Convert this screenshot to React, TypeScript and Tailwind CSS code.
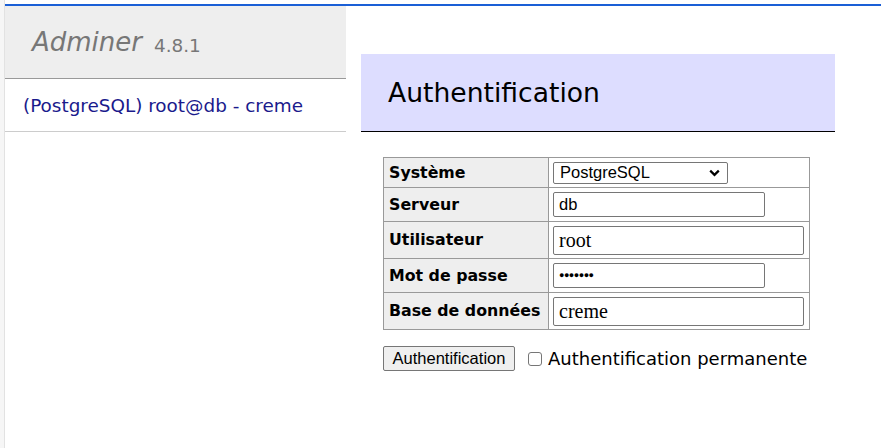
import React from 'react';

const rows = [
  { label: 'Système', kind: 'select', h: 'h-[30px]' },
  { label: 'Serveur', kind: 'server', h: 'h-[34px]' },
  { label: 'Utilisateur', kind: 'user', h: 'h-[37px]' },
  { label: 'Mot de passe', kind: 'password', h: 'h-[34px]' },
  { label: 'Base de données', kind: 'db', h: 'h-[37px]' },
];

const Field: React.FC<{ kind: string }> = ({ kind }) => {
  if (kind === 'select') {
    return (
      <div className="flex h-[22px] w-[175px] items-center justify-between rounded-[2px] border border-[#767676] pl-[6px] pr-[7px] font-['Liberation_Sans',Arial,sans-serif] text-[16.5px] text-black">
        <span>PostgreSQL</span>
        <svg width="11" height="8" viewBox="0 0 11 8" fill="none">
          <path d="M1.2 1.6 L5.5 5.9 L9.8 1.6" stroke="#000" strokeWidth="2.2" />
        </svg>
      </div>
    );
  }
  if (kind === 'server') {
    return (
      <div className="flex h-[25px] w-[212px] items-center rounded-[2px] border border-[#767676] px-[5px] font-['Liberation_Sans',Arial,sans-serif] text-[16.5px] text-black">
        db
      </div>
    );
  }
  if (kind === 'password') {
    return (
      <div className="flex h-[25px] w-[212px] items-center rounded-[2px] border border-[#767676] px-[5px] font-['Liberation_Sans',Arial,sans-serif] text-[9px] leading-none tracking-[-0.5px] text-black">
        ●●●●●●●
      </div>
    );
  }
  return (
    <div className="flex h-[29px] w-[251px] items-center rounded-[2px] border border-[#767676] px-[5px] font-['Liberation_Serif','Times_New_Roman',serif] text-[20px] text-black">
      {kind === 'user' ? 'root' : 'creme'}
    </div>
  );
};

export default function App() {
  return (
    <div className="flex min-h-[448px] w-full bg-white font-['DejaVu_Sans',Verdana,sans-serif] text-black">
      <div className="w-[5px] shrink-0 border-r border-[#e2e2e2] bg-[#f6f6f6]" />
      <div className="flex flex-1 flex-col pt-[4px]">
        <div className="h-[2px] bg-[#1a5fd6]" />
        <div className="flex flex-1">
          <div className="w-[341px] shrink-0">
            <div className="flex h-[73px] items-center gap-[12px] border-b border-[#999] bg-[#eee] pl-[27px] pt-[1px]">
              <span className="text-[26px] italic text-[#777]">Adminer</span>
              <span className="pt-[6px] text-[18.4px] text-[#777]">4.8.1</span>
            </div>
            <div className="flex h-[53px] items-center border-b border-[#ccc] pl-[18px] pt-[1px] text-[18.4px] text-[#1a1a8c]">
              (PostgreSQL) root@db - creme
            </div>
          </div>
          <div className="flex-1 pl-[15px] pt-[48px]">
            <div className="flex h-[78px] w-[474px] items-center border-b border-black bg-[#ddf] pl-[27px] pt-[1px] text-[26.6px]">
              Authentification
            </div>
            <div className="ml-[22px] mt-[25px]">
              <table className="border-collapse border border-[#999]">
                <tbody>
                  {rows.map((r) => (
                    <tr key={r.label} className={r.h}>
                      <th className="w-[165px] border border-[#999] bg-[#eee] px-[5px] text-left align-middle text-[15.8px] font-bold whitespace-nowrap">
                        {r.label}
                      </th>
                      <td className="w-[261px] border border-[#999] px-[4px] py-0 align-middle">
                        <Field kind={r.kind} />
                      </td>
                    </tr>
                  ))}
                </tbody>
              </table>
              <div className="mt-[15px] flex items-center">
                <div className="flex h-[25px] w-[132px] items-center justify-center rounded-[2px] border border-[#767676] bg-[#efefef] font-['Liberation_Sans',Arial,sans-serif] text-[16.5px]">
                  Authentification
                </div>
                <div className="ml-[13px] h-[14px] w-[14px] rounded-[3px] border border-[#767676] bg-white" />
                <span className="ml-[6px] text-[18px]">Authentification permanente</span>
              </div>
            </div>
          </div>
        </div>
      </div>
    </div>
  );
}
